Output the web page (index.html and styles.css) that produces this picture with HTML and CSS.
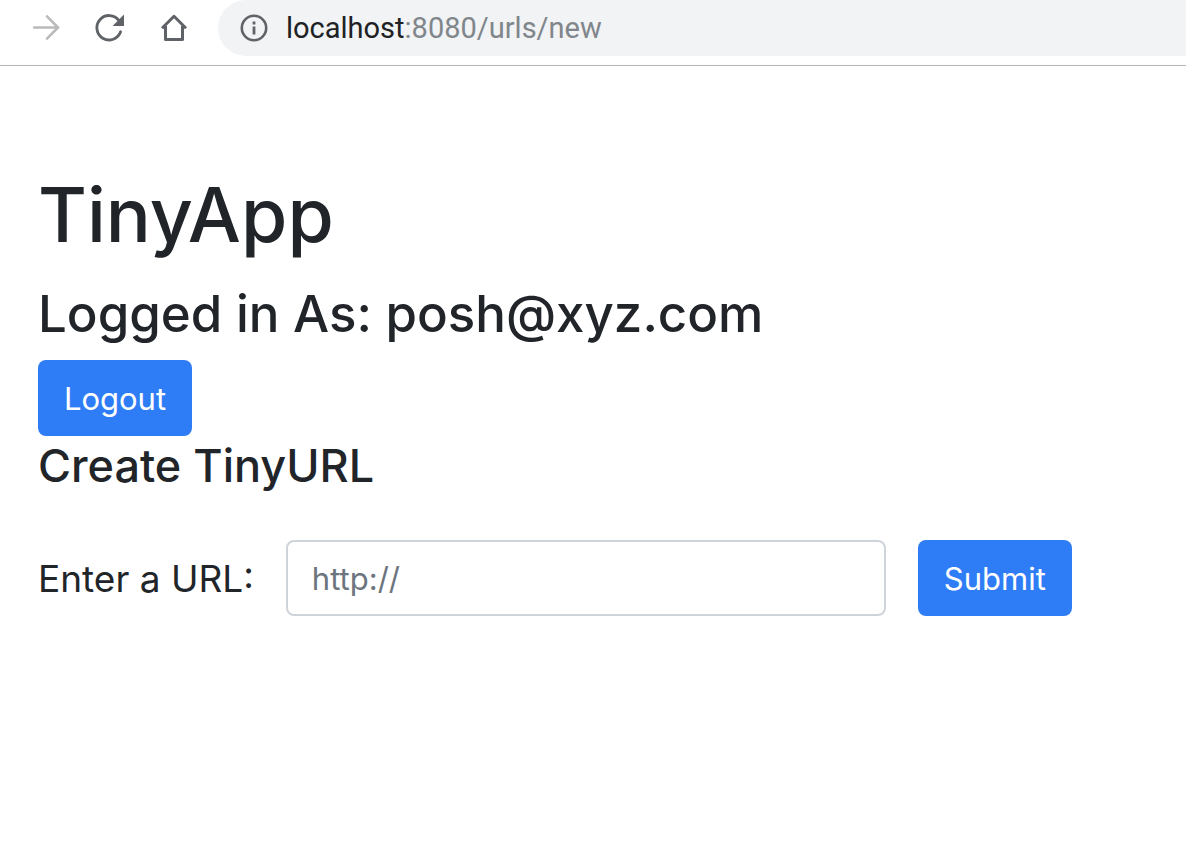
FILE: index.html
```html
<!DOCTYPE html>
<html lang="en">
<head>
<meta charset="utf-8">
<title>TinyApp</title>
<link rel="stylesheet" href="styles.css">
</head>
<body>
<header class="toolbar">
  <nav class="nav">
    <button class="icon-button forward" type="button" aria-label="Forward" disabled>
      <svg width="32" height="32" viewBox="0 0 32 32" fill="none" stroke="currentColor" stroke-width="2.6" stroke-linecap="round"><path d="M4.2 15.5H28M17 4.4L28 15.5L17 26.6"/></svg>
    </button>
    <button class="icon-button" type="button" aria-label="Reload">
      <svg width="32" height="32" viewBox="0 0 32 32" fill="none" stroke="currentColor" stroke-width="2.8"><path d="M25 8.6A12.2 12.2 0 1 0 26.6 19.8" stroke-linecap="round"/><path d="M30 2.6V14H18.6Z" fill="currentColor" stroke="none"/></svg>
    </button>
    <button class="icon-button" type="button" aria-label="Home">
      <svg width="32" height="32" viewBox="0 0 32 32" fill="none" stroke="currentColor" stroke-width="3"><path d="M4 16.2L16 4.3L28 16.2M7.5 14V27.5H24.5V14" stroke-linejoin="round"/></svg>
    </button>
  </nav>
  <div class="address">
    <svg class="info" width="28" height="28" viewBox="0 0 28 28" fill="none" stroke="currentColor"><circle cx="14" cy="14" r="12.2" stroke-width="2.6"/><path d="M14 7.6V10.4M14 12.6V20.6" stroke-width="2.8"/></svg>
    <span class="url"><span class="host">localhost</span>:8080/urls/new</span>
  </div>
</header>
<main class="page">
  <h1 class="title">TinyApp</h1>
  <h2 class="account">Logged in As: posh@xyz.com</h2>
  <form class="logout"><button class="button" type="submit">Logout</button></form>
  <h3 class="heading">Create TinyURL</h3>
  <form class="url-form">
    <label class="label" for="longURL">Enter a URL:</label>
    <input class="input" id="longURL" name="longURL" type="text" placeholder="http://">
    <button class="button" type="submit">Submit</button>
  </form>
</main>
</body>
</html>
```
FILE: styles.css
```css
* { box-sizing: border-box; }
body {
  margin: 0;
  background: #fff;
  color: #212529;
  font-family: Inter, "Liberation Sans", sans-serif;
}
.toolbar {
  display: flex;
  gap: 28px;
  height: 66px;
  padding-left: 30px;
  padding-bottom: 9px;
  border-bottom: 1px solid #b3b4b6;
}
.nav { display: flex; align-items: center; gap: 32px; }
.icon-button {
  display: flex;
  padding: 0;
  border: 0;
  background: none;
  color: #5f6368;
}
.forward { color: #bababa; }
.address {
  flex: 1;
  display: flex;
  align-items: center;
  gap: 18px;
  padding-left: 22px;
  background: #f1f3f4;
  border-radius: 28px 0 0 28px;
}
.info { color: #5f6368; }
.url { color: #80868b; font-family: Roboto, sans-serif; font-size: 29px; }
.host { color: #202124; }
.page { padding: 104px 38px 40px; }
.title, .account, .heading { margin: 0; font-weight: 500; }
.title { font-size: 75px; line-height: 90px; margin-bottom: 20px; }
.account { font-size: 51px; line-height: 68px; margin-bottom: 12px; }
.heading { font-size: 45px; line-height: 60px; margin-bottom: 44px; }
.button {
  min-width: 154px;
  height: 76px;
  padding: 0 24px;
  border: 0;
  border-radius: 8px;
  background: #2f7df6;
  color: #fff;
  font-family: inherit;
  font-size: 31px;
}
.logout { display: flex; }
.url-form { display: flex; align-items: center; gap: 32px; }
.label { font-size: 37px; white-space: nowrap; }
.input {
  flex: 0 1 600px;
  min-width: 0;
  height: 76px;
  padding: 0 24px;
  border: 2px solid #ced4da;
  border-radius: 8px;
  background: #fff;
  color: #495057;
  font-family: inherit;
  font-size: 31px;
}
.input::placeholder { color: #6c757d; opacity: 1; }
```
